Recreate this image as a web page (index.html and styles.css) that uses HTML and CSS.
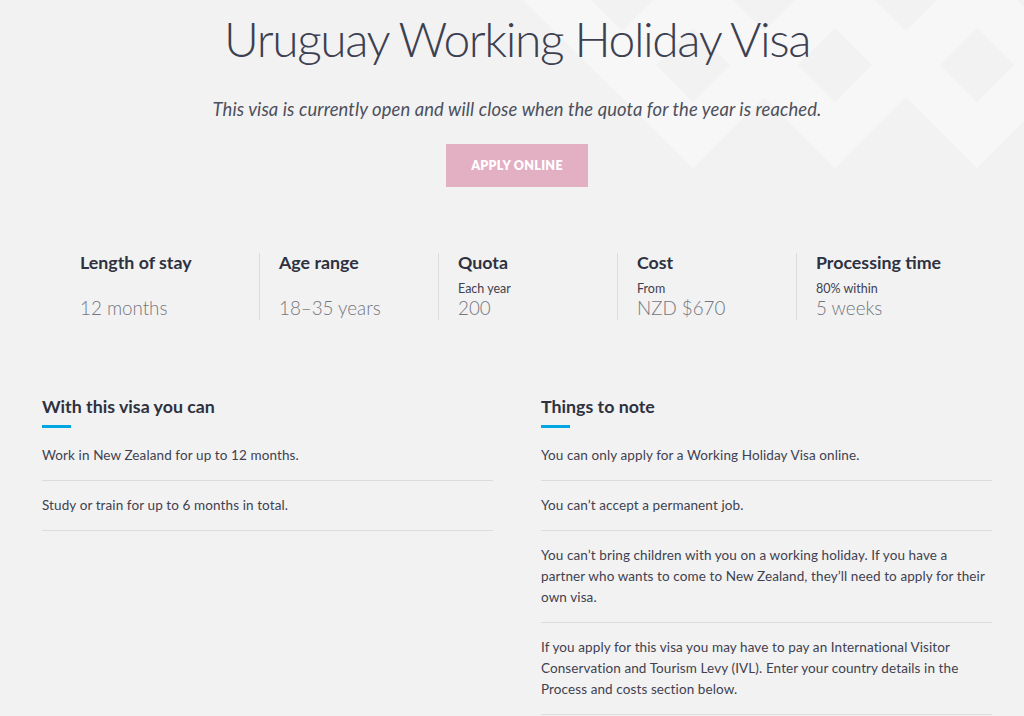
FILE: index.html
```html
<!DOCTYPE html>
<html lang="en">
<head>
<meta charset="utf-8">
<title>Uruguay Working Holiday Visa</title>
<link rel="stylesheet" href="styles.css">
</head>
<body>
<div class="pattern" aria-hidden="true">
  <svg width="1024" height="240" viewBox="0 0 1024 240">
    <polygon class="light" points="523,0 1024,0 1024,121 977,168 906,97 835,168 764,97 693,168"/>
    <polygon class="dark" points="693,28 730,65 693,102 656,65"/>
    <polygon class="dark" points="835,28 872,65 835,102 798,65"/>
    <polygon class="dark" points="977,28 1014,65 977,102 940,65"/>
    <polygon class="dark" points="622,-43 659,-6 622,31 585,-6"/>
    <polygon class="dark" points="764,-43 801,-6 764,31 727,-6"/>
    <polygon class="dark" points="906,-43 943,-6 906,31 869,-6"/>
    <polygon class="dark" points="1048,-43 1085,-6 1048,31 1011,-6"/>
  </svg>
</div>
<main class="page">
  <header class="hero">
    <h1 class="title">Uruguay Working Holiday Visa</h1>
    <p class="lead">This visa is currently open and will close when the quota for the year is reached.</p>
    <a class="btn" href="#">APPLY ONLINE</a>
  </header>

  <section class="stats">
    <div class="stat">
      <div class="stat-label">Length of stay</div>
      <div class="stat-value">12 months</div>
    </div>
    <div class="stat">
      <div class="stat-label">Age range</div>
      <div class="stat-value">18–35 years</div>
    </div>
    <div class="stat">
      <div class="stat-label">Quota</div>
      <div class="stat-sub">Each year</div>
      <div class="stat-value">200</div>
    </div>
    <div class="stat">
      <div class="stat-label">Cost</div>
      <div class="stat-sub">From</div>
      <div class="stat-value">NZD $670</div>
    </div>
    <div class="stat">
      <div class="stat-label">Processing time</div>
      <div class="stat-sub">80% within</div>
      <div class="stat-value">5 weeks</div>
    </div>
  </section>

  <section class="columns">
    <div class="col">
      <h2 class="col-title">With this visa you can</h2>
      <ul class="list">
        <li>Work in New Zealand for up to 12 months.</li>
        <li>Study or train for up to 6 months in total.</li>
      </ul>
    </div>
    <div class="col">
      <h2 class="col-title">Things to note</h2>
      <ul class="list">
        <li>You can only apply for a Working Holiday Visa online.</li>
        <li>You can’t accept a permanent job.</li>
        <li>You can’t bring children with you on a working holiday. If you have a partner who wants to come to New Zealand, they’ll need to apply for their own visa.</li>
        <li>If you apply for this visa you may have to pay an International Visitor Conservation and Tourism Levy (IVL). Enter your country details in the Process and costs section below.</li>
      </ul>
    </div>
  </section>
</main>
</body>
</html>
```

FILE: styles.css
```css
html, body {
  margin: 0;
  padding: 0;
}

body {
  background: #f2f2f2;
  font-family: "Lato", "Noto Sans", sans-serif;
  color: #3f4150;
  position: relative;
  min-height: 716px;
  overflow: hidden;
}

.pattern {
  position: absolute;
  top: 0;
  left: 0;
  z-index: 0;
  line-height: 0;
}

.pattern .light { fill: #f7f7f7; }
.pattern .dark { fill: #f2f2f2; }

.page {
  position: relative;
  z-index: 1;
  width: 950px;
  margin-left: 42px;
}

.hero {
  display: flex;
  flex-direction: column;
  align-items: center;
  padding-top: 9px;
}

.title {
  margin: 0;
  font-size: 48px;
  line-height: 60px;
  font-weight: 300;
  color: #3c4050;
  letter-spacing: -1.45px;
}

.lead {
  margin: 28px 0 0;
  font-size: 18.4px;
  line-height: 24px;
  font-style: italic;
  font-weight: 400;
  letter-spacing: 0.1px;
  color: #4d505c;
}

.btn {
  margin-top: 23px;
  width: 142px;
  height: 43px;
  display: flex;
  align-items: center;
  justify-content: center;
  background: #e3afc3;
  color: #ffffff;
  font-size: 12.5px;
  font-weight: 800;
  letter-spacing: 0.3px;
  text-decoration: none;
}

.stats {
  display: grid;
  grid-template-columns: repeat(5, 179px);
  margin: 66px 0 0 38px;
}

.stat {
  display: flex;
  flex-direction: column;
  height: 67px;
  padding-left: 19px;
  border-left: 1px solid #dcdcdc;
}

.stat:first-child {
  padding-left: 0;
  border-left: none;
}

.stat-label {
  font-size: 17.8px;
  line-height: 20px;
  font-weight: 700;
  color: #2e3140;
  margin-top: -1px;
}

.stat-sub {
  margin-top: auto;
  font-size: 12.5px;
  line-height: 14px;
  color: #3f4150;
  margin-bottom: 1px;
}

.stat-value {
  font-size: 18.8px;
  line-height: 22px;
  font-weight: 300;
  color: #737680;
  margin-bottom: 1px;
}

.stat-label + .stat-value {
  margin-top: auto;
}

.columns {
  display: grid;
  grid-template-columns: 451px 451px;
  column-gap: 48px;
  margin-top: 76px;
}

.col-title {
  margin: 0;
  font-size: 17.8px;
  line-height: 20px;
  font-weight: 700;
  color: #2e3140;
  padding-bottom: 3px;
}

.col-title::after {
  content: "";
  display: block;
  width: 29px;
  height: 3px;
  background: #00a6e2;
  margin-top: 9px;
}

.list {
  list-style: none;
  margin: 0;
  padding: 0;
}

.list li {
  font-size: 13.5px;
  line-height: 21px;
  letter-spacing: 0.1px;
  padding: 14px 0;
  border-bottom: 1px solid #dcdcdc;
  color: #3f4150;
}
```
